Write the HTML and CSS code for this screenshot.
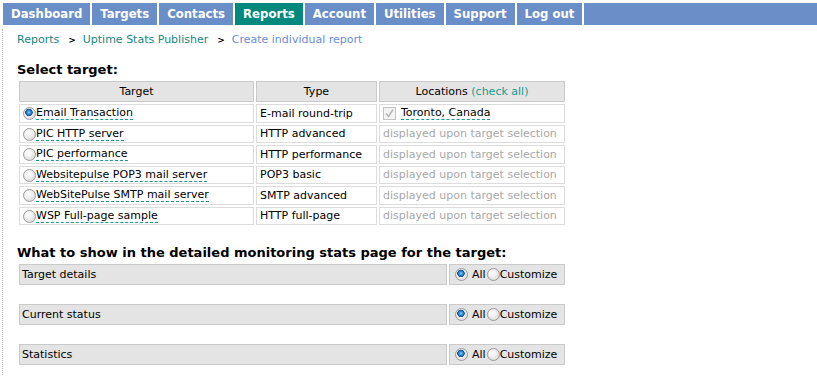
FILE: index.html
```html
<!DOCTYPE html>
<html lang="en">
<head>
  <meta charset="UTF-8" />
  <title>Create individual report</title>
  <link rel="stylesheet" href="styles.css">
</head>
<body>

  <div class="nav">
    <a class="tab">Dashboard</a>
    <a class="tab">Targets</a>
    <a class="tab">Contacts</a>
    <a class="tab active">Reports</a>
    <a class="tab">Account</a>
    <a class="tab">Utilities</a>
    <a class="tab">Support</a>
    <a class="tab">Log out</a>
    <span class="fill"></span>
  </div>

  <div class="main">
    <div class="crumbs">
      <a>Reports</a><span class="sep">&gt;</span><a>Uptime Stats Publisher</a><span class="sep">&gt;</span><span class="here">Create individual report</span>
    </div>

    <h2 class="first">Select target:</h2>
    <table class="targets">
      <thead>
        <tr>
          <th class="c-target">Target</th>
          <th class="c-type">Type</th>
          <th class="c-loc">Locations <a class="link">(check all)</a></th>
        </tr>
      </thead>
      <tbody>
        <tr>
          <td><input type="radio" name="t" checked><span class="tname">Email Transaction</span></td>
          <td>E-mail round-trip</td>
          <td><span class="chk"><svg width="13" height="13" viewBox="0 0 13 13"><rect x="0.5" y="0.5" width="12" height="12" fill="#f4f4f4" stroke="#c4c4c4"/><path d="M3 6.5 L5.5 9.5 L10 2.5" fill="none" stroke="#b8b8b8" stroke-width="1.6"/></svg></span><span class="tname">Toronto, Canada</span></td>
        </tr>
        <tr>
          <td><input type="radio" name="t"><span class="tname">PIC HTTP server</span></td>
          <td>HTTP advanced</td>
          <td class="muted">displayed upon target selection</td>
        </tr>
        <tr>
          <td><input type="radio" name="t"><span class="tname">PIC performance</span></td>
          <td>HTTP performance</td>
          <td class="muted">displayed upon target selection</td>
        </tr>
        <tr>
          <td><input type="radio" name="t"><span class="tname">Websitepulse POP3 mail server</span></td>
          <td>POP3 basic</td>
          <td class="muted">displayed upon target selection</td>
        </tr>
        <tr>
          <td><input type="radio" name="t"><span class="tname">WebSitePulse SMTP mail server</span></td>
          <td>SMTP advanced</td>
          <td class="muted">displayed upon target selection</td>
        </tr>
        <tr>
          <td><input type="radio" name="t"><span class="tname">WSP Full-page sample</span></td>
          <td>HTTP full-page</td>
          <td class="muted">displayed upon target selection</td>
        </tr>
      </tbody>
    </table>

    <h2 class="second">What to show in the detailed monitoring stats page for the target:</h2>

    <div class="opt-row">
      <div class="opt-name">Target details</div>
      <div class="opt-choice"><input type="radio" name="o1" checked><span class="lbl-all">All</span><input type="radio" name="o1">Customize</div>
    </div>
    <div class="opt-row">
      <div class="opt-name">Current status</div>
      <div class="opt-choice"><input type="radio" name="o2" checked><span class="lbl-all">All</span><input type="radio" name="o2">Customize</div>
    </div>
    <div class="opt-row">
      <div class="opt-name">Statistics</div>
      <div class="opt-choice"><input type="radio" name="o3" checked><span class="lbl-all">All</span><input type="radio" name="o3">Customize</div>
    </div>
  </div>

</body>
</html>
```

FILE: styles.css
```css
* {
  box-sizing: border-box;
}

body {
  margin: 0;
  font-family: 'DejaVu Sans', Verdana, sans-serif;
  font-size: 11px;
  color: #000;
  background: #fff;
}

/* top navigation */
.nav {
  display: flex;
  gap: 2px;
  margin: 3px 0 0 3px;
  height: 22px;
}

.tab {
  display: block;
  padding: 0 8px;
  line-height: 22px;
  background: #6a8fc8;
  color: #fff;
  font-family: 'DejaVu Sans Condensed', 'DejaVu Sans', sans-serif;
  font-stretch: condensed;
  font-weight: bold;
  font-size: 13px;
  cursor: pointer;
}

.tab.active {
  background: #00897c;
}

.nav .fill {
  flex: 1;
  background: #6a8fc8;
}

/* page body */
.main {
  margin: 4px 0 0 2px;
  border-left: 1px dotted #b4b4b4;
  padding-left: 14px;
  min-height: 360px;
}

.crumbs {
  padding-top: 4px;
  line-height: 14px;
}

.crumbs a {
  color: #16887f;
}

.crumbs .sep {
  margin: 0 7px 0 9px;
  font-weight: bold;
  font-size: 9px;
}

.crumbs .here {
  color: #6a8ed6;
}

h2 {
  margin: 16px 0 1px;
  font-size: 13px;
  line-height: 16px;
  font-weight: bold;
}

h2.first {
  margin-top: 15px;
}

h2.second {
  margin-top: 18px;
}

/* targets table */
.targets {
  width: 550px;
  border-spacing: 2px;
  table-layout: fixed;
}

.targets th {
  height: 21px;
  padding: 0;
  background: #e4e4e4;
  border: 1px solid #cacaca;
  font-weight: normal;
  text-align: center;
  white-space: nowrap;
}

.c-target { width: 235px; }
.c-type { width: 121px; }
.c-loc { width: 186px; }

.link {
  color: #1a9a8f;
}

.targets td {
  height: 18.5px;
  padding: 0 3px;
  border: 1px solid #dcdcdc;
  white-space: nowrap;
  vertical-align: middle;
}

.targets td.muted {
  color: #a8a8a8;
}

.tname {
  border-bottom: 1px dashed #1a9a8f;
  line-height: 13px;
  display: inline-block;
}

.chk {
  display: inline-block;
  vertical-align: top;
  margin: 1px 5px 0 0;
  line-height: 0;
}

/* radio buttons */
input[type="radio"] {
  appearance: none;
  -webkit-appearance: none;
  width: 13px;
  height: 13px;
  margin: 0;
  border: 1px solid #9a9a9a;
  border-radius: 50%;
  background: radial-gradient(circle at 40% 35%, #fff 0, #f0f0f0 40%, #cfcfcf 100%);
  vertical-align: top;
}

input[type="radio"]:checked {
  background:
    radial-gradient(circle at 45% 40%, #8fd0ff 0, #2c86cf 2px, #0d4f8f 3.5px, transparent 4px),
    radial-gradient(circle at 40% 35%, #fff 0, #f0f0f0 40%, #cfcfcf 100%);
}

.targets td input[type="radio"] {
  margin-top: 1px;
}

/* display options */
.opt-row {
  display: flex;
  gap: 2px;
  margin: 0 0 19px 2px;
  width: 546px;
}

h2 + .opt-row {
  margin-top: 3px;
}

.opt-name {
  width: 428px;
  height: 21px;
  padding: 3px 2px 0;
  background: #e4e4e4;
  border: 1px solid #cacaca;
}

.opt-choice {
  width: 116px;
  height: 21px;
  padding: 3px 0 0 5px;
  background: #e4e4e4;
  border: 1px solid #cacaca;
  white-space: nowrap;
}

.opt-choice input[type="radio"] {
  margin-top: 0;
}

.lbl-all {
  margin: 0 1px 0 4px;
}
```
